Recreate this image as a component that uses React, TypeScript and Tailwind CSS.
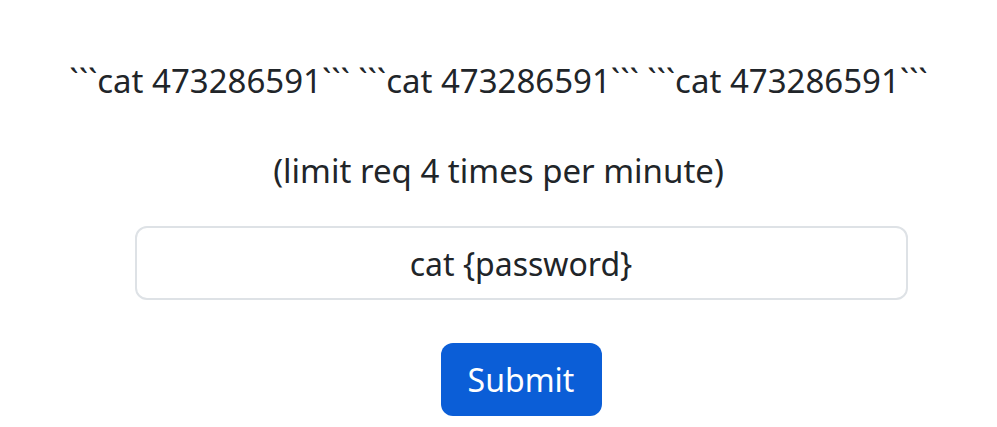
export default function App() {
  const line = "```cat 473286591``` ```cat 473286591``` ```cat 473286591```";
  return (
    <div className="min-h-[427px] bg-white text-[#212529] font-['Noto_Sans',sans-serif] text-[33px]">
      <div className="flex flex-col items-center pt-[58px]">
        <p className="leading-[45px]">{line}</p>
        <p className="mt-[45px] leading-[45px]">(limit req 4 times per minute)</p>
      </div>
      <form className="flex flex-col items-center pl-[45px] mt-[33px]">
        <input
          className="w-[773px] h-[74px] rounded-[12px] border-2 border-[#dee2e6] text-center text-[32px] text-[#212529] outline-none"
          defaultValue="cat {password}"
        />
        <button
          type="button"
          className="mt-[43px] w-[161px] h-[73px] rounded-[12px] bg-[#0b5ed7] text-white text-[32px]"
        >
          Submit
        </button>
      </form>
    </div>
  );
}
